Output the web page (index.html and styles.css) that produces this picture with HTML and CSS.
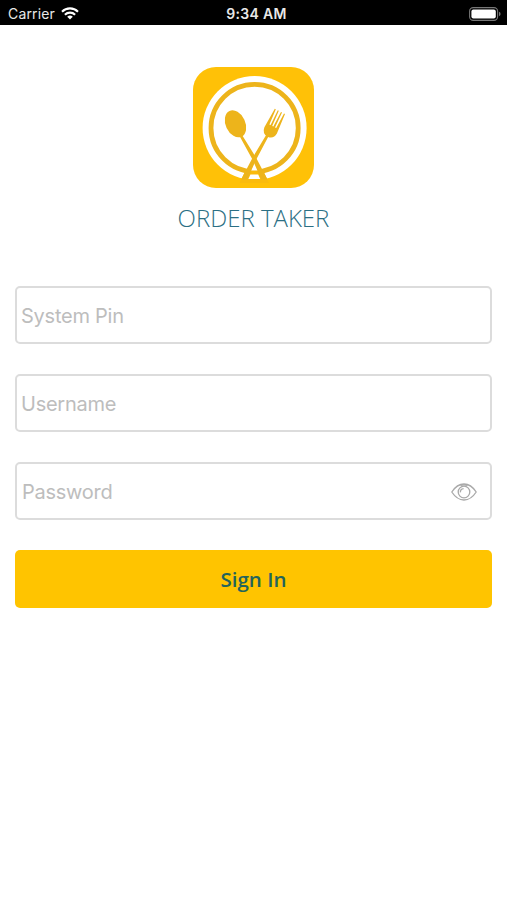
FILE: index.html
```
<!DOCTYPE html>
<html lang="en">
<head>
  <meta charset="UTF-8">
  <title>Order Taker</title>
  <meta name="viewport" content="width=device-width, initial-scale=1">
  <link rel="stylesheet" href="styles.css">
</head>
<body>
  <!-- Status bar -->
  <div class="status-bar">
    <div class="carrier">
      <span>Carrier</span>
      <svg class="wifi" viewBox="0 0 18 13" width="18" height="13">
        <g fill="none" stroke="#fff" stroke-width="2.1">
          <path d="M1 4.7a11.4 11.4 0 0 1 16 0"/>
          <path d="M3.9 7.7a7.2 7.2 0 0 1 10.2 0"/>
        </g>
        <path d="M9 12.6L6.2 9.8a4 4 0 0 1 5.6 0z" fill="#fff"/>
      </svg>
    </div>
    <div class="clock">9:34 AM</div>
    <div class="battery">
      <svg viewBox="0 0 32 14" width="32" height="14">
        <rect x=".6" y=".6" width="28" height="12.8" rx="3.6" fill="none" stroke="#777" stroke-width="1.1"/>
        <rect x="2.4" y="2.4" width="24.4" height="9.2" rx="2" fill="#fff"/>
        <path d="M30 4.8q1.6.6 1.6 2.2t-1.6 2.2z" fill="#777"/>
      </svg>
    </div>
  </div>

  <main class="login">
    <!-- Plate with spoon and fork -->
    <svg class="logo" viewBox="0 0 121 121" width="121" height="121">
      <rect width="121" height="121" rx="23" fill="#ffc107"/>
      <circle cx="61.6" cy="61" r="52" fill="#fff"/>
      <circle cx="61.6" cy="61" r="43.6" fill="none" stroke="#edb41b" stroke-width="4.8"/>
      <path d="M52.3 104H70.3L76 116H46.6z" fill="#fabb0d"/>
      <path d="M61.3 96L57.4 103.4H65.2z" fill="#fff"/>
      <g fill="#edb41b">
        <ellipse cx="42.5" cy="56.8" rx="9.8" ry="14.2" transform="rotate(-25 42.5 56.8)"/>
        <path d="M46.8 69.5L49.2 68.3L63 90.5L74.5 112.5H68.2L60 93.5z"/>
        <path d="M75.8 68.7L73.6 67.3L59.7 90.5L48.1 112.5H54.4L62.7 93.5z"/>
        <path d="M71.4 60.2L81.8 41.8L82.8 42.3L76.4 57.4L77.6 58L84.8 43.2L85.8 43.8L79.2 58.9L80.3 59.5L88 45L89 45.5L82 60.5L83.2 61.1L91 46.5L92 47L83.9 66.5Q80.8 72 75 70Q68.8 67 71.4 60.2z"/>
      </g>
      <path d="M61.3 98.4L59 102.8H63.6z" fill="#fff"/>
      <path d="M57.4 107.4H65.2L67.2 112H55.4z" fill="#fff"/>
    </svg>
    <h1 class="title">ORDER TAKER</h1>

    <form class="login-form" autocomplete="off">
      <div class="field">
        <input id="systemPin" type="text" placeholder="System Pin" aria-label="System Pin">
      </div>
      <div class="field">
        <input id="username" type="text" placeholder="Username" aria-label="Username">
      </div>
      <div class="field field-password">
        <input id="password" type="password" placeholder="Password" aria-label="Password">
        <svg class="eye" viewBox="0 0 26 18" width="26" height="18">
          <g fill="none" stroke="#a9a9a9" stroke-width="1.3">
            <path d="M.8 9Q6 1 13 1t12.2 8Q20 17 13 17T.8 9z"/>
            <circle cx="13" cy="9" r="5.8"/>
            <path d="M9.4 9.4A3.6 3.6 0 0 1 12.6 5.6"/>
            <path d="M9.4 2.5Q13 1.2 16.6 2.5"/>
          </g>
        </svg>
      </div>
      <button type="submit" class="sign-in">Sign In</button>
    </form>
  </main>
</body>
</html>
```
FILE: styles.css
```
:root {
  --accent: #ffc400;
  --teal: #2b6f84;
  --border: #dcdcdc;
  --placeholder: #bdbdbd;
}
* { box-sizing: border-box; }
body {
  margin: 0;
  background: #fff;
  font-family: Inter, "Liberation Sans", sans-serif;
}
/* Status bar */
.status-bar {
  display: grid;
  grid-template-columns: 1fr auto 1fr;
  align-items: center;
  height: 25px;
  padding: 2px 6px 0 8px;
  background: #000;
  color: #e8e8e8;
  font-size: 14px;
  line-height: 22px;
}
.carrier {
  display: flex;
  align-items: center;
  gap: 6px;
  letter-spacing: 0.15px;
}
.wifi { display: block; }
.clock {
  padding-left: 4px;
  font-weight: 600;
  letter-spacing: 0.3px;
}
.battery {
  display: flex;
  justify-content: flex-end;
}
/* Login */
.login {
  display: flex;
  flex-direction: column;
  align-items: center;
  padding: 42px 15px 0;
}
.logo { display: block; }
.title {
  margin: 13px 0 0;
  color: var(--teal);
  font-family: "Open Sans", sans-serif;
  font-size: 24px;
  font-weight: 300;
  line-height: 34px;
}
.login-form {
  display: flex;
  flex-direction: column;
  gap: 30px;
  width: 100%;
  margin-top: 51px;
}
.field {
  display: flex;
  align-items: center;
  height: 58px;
  padding: 2px 13px 0 4px;
  border: 2px solid var(--border);
  border-radius: 5px;
}
.field input {
  flex: 1;
  min-width: 0;
  padding: 0;
  border: 0;
  outline: none;
  background: transparent;
  color: #333;
  font-family: inherit;
  font-size: 20px;
  letter-spacing: -0.25px;
}
.field input::placeholder {
  color: var(--placeholder);
  opacity: 1;
}
.field-password { padding-left: 5px; }
.sign-in {
  height: 58px;
  padding: 0;
  border: 0;
  border-radius: 5px;
  background: var(--accent);
  color: #24645c;
  font-family: "Open Sans", sans-serif;
  font-size: 20.5px;
  font-weight: 600;
  cursor: pointer;
}
```
